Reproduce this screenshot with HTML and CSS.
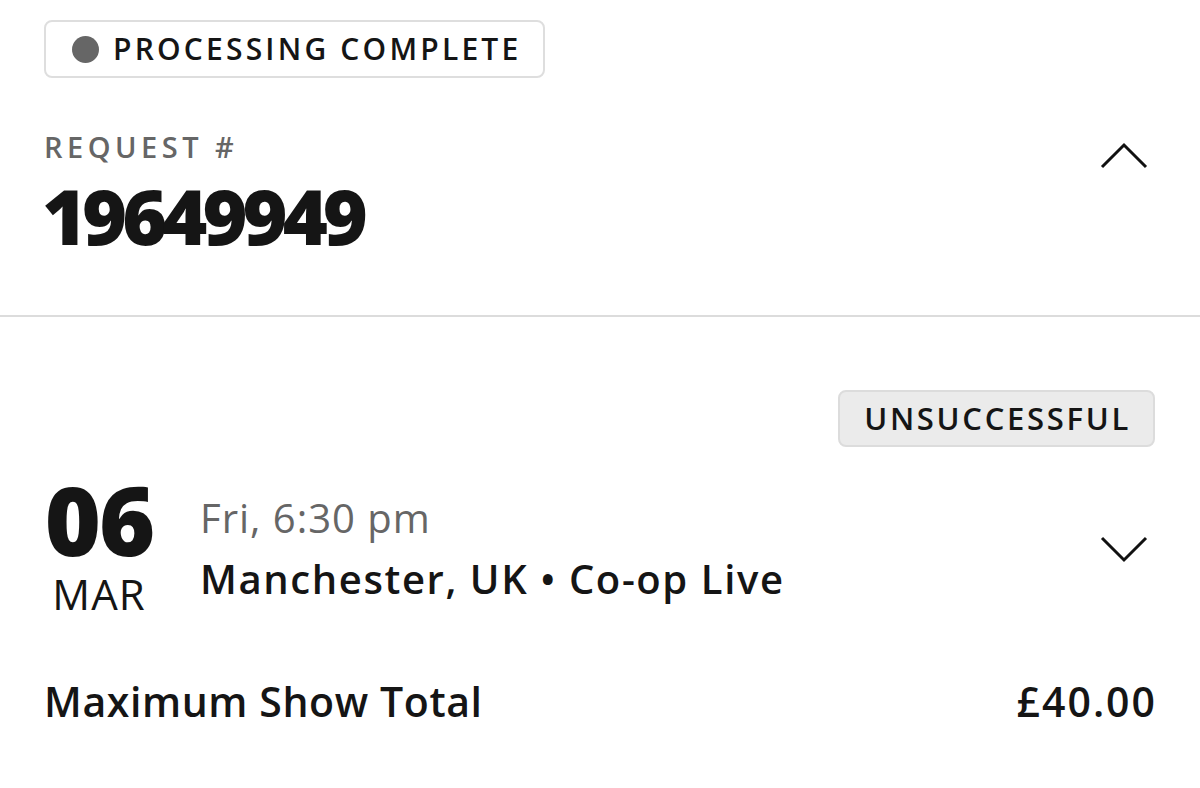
FILE: index.html
```html
<!DOCTYPE html>
<html lang="en">
<head>
  <meta charset="UTF-8" />
  <meta name="viewport" content="width=device-width, initial-scale=1.0" />
  <title>Request 19649949</title>
  <link rel="stylesheet" href="styles.css">
</head>
<body>
  <div class="request-head">
    <div class="status-pill">
      <span class="dot"></span>
      <span>PROCESSING COMPLETE</span>
    </div>
    <div class="request-row">
      <div>
        <div class="label">REQUEST #</div>
        <div class="request-num">19649949</div>
      </div>
      <svg class="chevron" viewBox="0 0 48 28" width="48" height="28">
        <polyline points="2,25 24,3 46,25" />
      </svg>
    </div>
  </div>

  <div class="show">
    <div class="show-status">
      <span class="result-pill">UNSUCCESSFUL</span>
    </div>
    <div class="show-row">
      <div class="date">
        <div class="day">06</div>
        <div class="month">MAR</div>
      </div>
      <div class="show-info">
        <div class="time">Fri, 6:30 pm</div>
        <div class="venue">Manchester, UK &bull; Co-op Live</div>
      </div>
      <svg class="chevron down" viewBox="0 0 48 28" width="48" height="28">
        <polyline points="2,3 24,25 46,3" />
      </svg>
    </div>
    <div class="total-row">
      <span>Maximum Show Total</span>
      <span class="price">&pound;40.00</span>
    </div>
  </div>
</body>
</html>
```

FILE: styles.css
```css
body {
  margin: 0;
  font-family: "Open Sans", Lato, sans-serif;
  color: #151515;
  background: #fff;
}

.request-head {
  padding: 20px 45px 0 44px;
  height: 295px;
  border-bottom: 2px solid #dcdcdc;
}
.status-pill {
  display: inline-flex;
  align-items: center;
  gap: 14px;
  box-sizing: border-box;
  height: 58px;
  padding: 0 22px 0 26px;
  border: 2px solid #dedede;
  border-radius: 8px;
  font-size: 30px;
  line-height: 1;
  font-weight: 600;
  letter-spacing: 3.2px;
}
.dot {
  width: 27px;
  height: 27px;
  border-radius: 50%;
  background: #666;
}
.request-row {
  display: flex;
  justify-content: space-between;
  align-items: flex-start;
  margin-top: 54px;
}
.label {
  font-size: 29px;
  line-height: 1;
  font-weight: 600;
  letter-spacing: 4.5px;
  color: #666;
}
.request-num {
  font-size: 77px;
  font-weight: 800;
  line-height: 1;
  margin-top: 16px;
  margin-left: -2px;
  letter-spacing: -5px;
}
.chevron {
  fill: none;
  stroke: #111;
  stroke-width: 3;
  margin-top: 10px;
  margin-right: 7px;
}

.show {
  padding: 73px 45px 0 44px;
}
.show-status {
  display: flex;
  justify-content: flex-end;
}
.result-pill {
  display: inline-flex;
  align-items: center;
  box-sizing: border-box;
  height: 57px;
  padding: 0 22px 0 24px;
  background: #ebebeb;
  border: 2px solid #dcdcdc;
  border-radius: 8px;
  font-size: 31px;
  line-height: 1;
  font-weight: 600;
  letter-spacing: 2.7px;
}
.show-row {
  display: flex;
  align-items: flex-start;
  margin-top: 24px;
}
.date {
  width: 110px;
  text-align: center;
}
.day {
  font-size: 96px;
  font-weight: 800;
  line-height: 1;
  letter-spacing: -2px;
}
.month {
  font-size: 42px;
  line-height: 1;
  margin-top: 6px;
  letter-spacing: 1px;
}
.show-info {
  flex: 1;
  margin-left: 46px;
  padding-top: 27px;
}
.time {
  font-size: 40px;
  line-height: 1;
  color: #666;
  letter-spacing: 1px;
}
.venue {
  font-size: 40px;
  line-height: 1;
  font-weight: 600;
  margin-top: 21px;
  letter-spacing: 1.6px;
}
.chevron.down {
  margin-top: 64px;
}
.total-row {
  display: flex;
  justify-content: space-between;
  margin-top: 66px;
  font-size: 41px;
  line-height: 1;
  font-weight: 600;
  letter-spacing: 0.6px;
}
.price {
  letter-spacing: 2px;
  margin-right: -2px;
}
```
